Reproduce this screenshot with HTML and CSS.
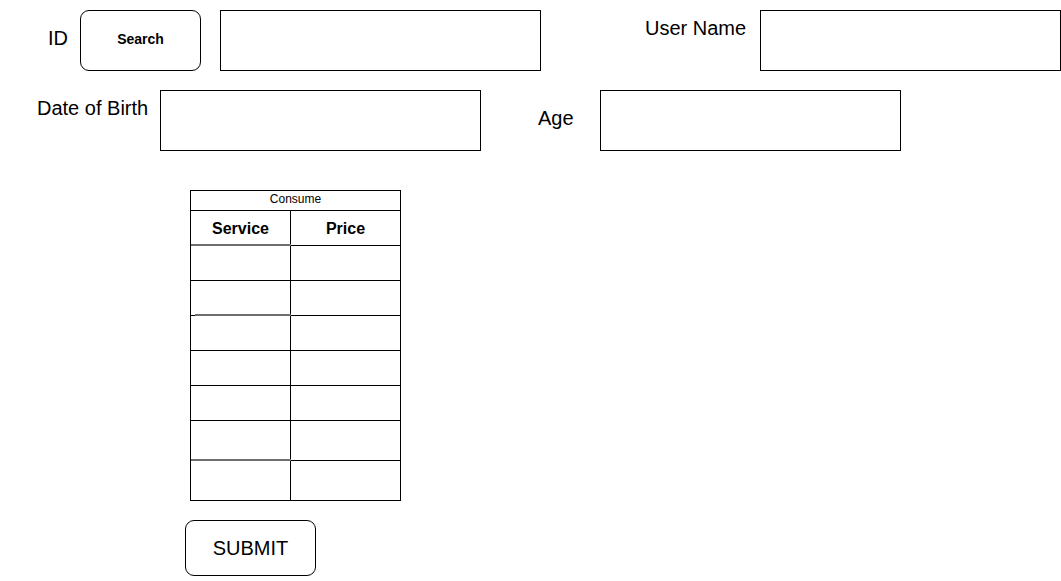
FILE: index.html
```html
<!DOCTYPE html>
<html lang="en">
<head>
    <meta charset="UTF-8">
    <meta name="viewport" content="width=device-width, initial-scale=1.0">
    <title>Consume form</title>
<link rel="stylesheet" href="styles.css">
</head>
<body>
<div class="page">
    <div class="row row-top">
        <label class="label label-id" for="id">ID</label>
        <button type="button" class="btn btn-search">Search</button>
        <input type="text" id="id" class="field field-id">
        <label class="label label-user" for="username">User Name</label>
        <input type="text" id="username" class="field field-user">
    </div>
    <div class="row row-mid">
        <label class="label label-dob" for="dob">Date of Birth</label>
        <input type="text" id="dob" class="field field-dob">
        <label class="label label-age" for="age">Age</label>
        <input type="text" id="age" class="field field-age">
    </div>

    <div class="consume">
        <div class="cell caption">Consume</div>
        <div class="cell head">Service</div>
        <div class="cell head">Price</div>

        <div class="cell sketch"></div><div class="cell"></div>
        <div class="cell"></div><div class="cell"></div>
        <div class="cell sketch sketch-short"></div><div class="cell"></div>
        <div class="cell"></div><div class="cell"></div>
        <div class="cell"></div><div class="cell"></div>
        <div class="cell"></div><div class="cell"></div>
        <div class="cell sketch"></div><div class="cell"></div>
    </div>

    <button type="button" class="btn btn-submit">SUBMIT</button>
</div>
</body>
</html>
```

FILE: styles.css
```css
html, body {
    margin: 0;
    background-color: #fff;
    color: #000;
    font-family: "Liberation Sans", Arial, sans-serif;
}
.page {
    width: 1061px;
    padding-top: 10px;
}
.row {
    display: flex;
    align-items: flex-start;
}
.row-top {
    height: 61px;
}
.row-mid {
    height: 61px;
    margin-top: 19px;
}
.label {
    font-size: 20px;
    line-height: 23px;
    white-space: nowrap;
}
.label-id {
    width: 32px;
    margin-left: 48px;
    margin-top: 17px;
}
.label-user {
    width: 115px;
    margin-left: 104px;
    margin-top: 7px;
}
.label-dob {
    width: 123px;
    margin-left: 37px;
    margin-top: 7px;
}
.label-age {
    width: 62px;
    margin-left: 57px;
    margin-top: 17px;
}
.field {
    box-sizing: border-box;
    height: 61px;
    padding: 0 8px;
    border: 1px solid #000;
    border-radius: 0;
    background: #fff;
    font-family: inherit;
    font-size: 16px;
}
.field-id {
    width: 321px;
    margin-left: 19px;
}
.field-user {
    width: 301px;
}
.field-dob {
    width: 321px;
}
.field-age {
    width: 301px;
}
.btn {
    box-sizing: border-box;
    border: 1px solid #000;
    border-radius: 9px;
    background: #fff;
    color: #000;
    font-family: inherit;
    padding: 0;
}
.btn-search {
    width: 121px;
    height: 61px;
    padding-bottom: 4px;
    font-size: 14px;
    font-weight: bold;
}

/* consume table: black gaps act as grid lines */
.consume {
    display: grid;
    grid-template-columns: 99px 109px;
    grid-template-rows: 19px 34px 34px 34px 34px 34px 34px 39px 39px;
    gap: 1px;
    width: 209px;
    padding: 1px;
    margin-top: 39px;
    margin-left: 190px;
    background-color: #000;
}
.cell {
    position: relative;
    background-color: #fff;
}
.caption {
    grid-column: 1 / 3;
    font-size: 12px;
    line-height: 17px;
    text-align: center;
}
.head {
    display: flex;
    align-items: center;
    justify-content: center;
    padding-top: 1px;
    font-size: 16px;
    font-weight: bold;
}
.sketch::before {
    content: "";
    position: absolute;
    top: -2px;
    left: 0;
    right: -1px;
    height: 2px;
    background-color: #6e6e6e;
}
.sketch-short::before {
    left: 4px;
}
.btn-submit {
    display: block;
    width: 131px;
    height: 56px;
    margin-top: 19px;
    margin-left: 185px;
    font-size: 20px;
}
```
